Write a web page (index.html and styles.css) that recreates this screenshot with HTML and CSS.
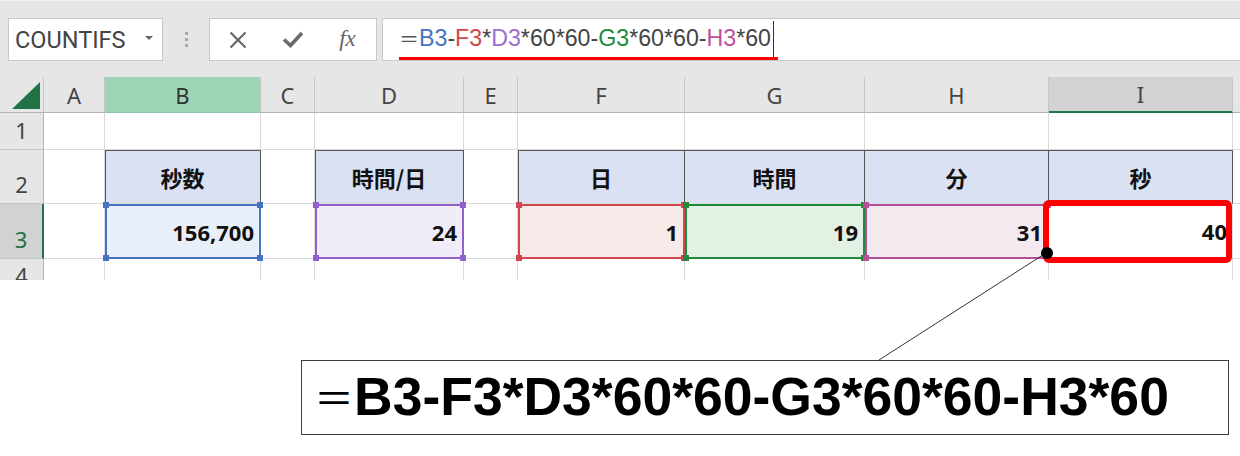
FILE: index.html
```html
<!doctype html>
<html>
<head>
<meta charset="utf-8">
<title>秒数から日・時間・分・秒</title>
<link rel="stylesheet" href="styles.css">
</head>
<body>

<div class="toolbar">
	<div class="namebox"><span class="name">COUNTIFS</span><span class="caret"></span></div>
	<div class="grip"><i></i><i></i><i></i></div>
	<div class="btns">
		<span class="btn"><svg width="18" height="16" viewBox="0 0 18 16"><path d="M1.5 0.5 L16.5 15.5 M16.5 0.5 L1.5 15.5" stroke="#6a6a6a" stroke-width="2.2" fill="none"/></svg></span>
		<span class="btn"><svg width="22" height="17" viewBox="0 0 22 17"><path d="M2 8.5 L8.5 14.5 L20 2" stroke="#6a6a6a" stroke-width="3.6" fill="none"/></svg></span>
		<span class="btn fx">fx</span>
	</div>
	<div class="formula">
		<span class="ftext"><span class="eq">＝</span><span class="r-b">B3</span>-<span class="r-f">F3</span>*<span class="r-d">D3</span>*60*60-<span class="r-g">G3</span>*60*60-<span class="r-h">H3</span>*60<span class="cursor"></span></span>
	</div>
</div>

<div class="sheet">
	<!-- 列見出し -->
	<div class="corner"><svg width="44" height="36" viewBox="0 0 44 36"><polygon points="40,5 40,32 12,32" fill="#217346"/></svg></div>
	<div class="ch">A</div>
	<div class="ch ch-b">B</div>
	<div class="ch">C</div>
	<div class="ch">D</div>
	<div class="ch">E</div>
	<div class="ch">F</div>
	<div class="ch">G</div>
	<div class="ch">H</div>
	<div class="ch ch-i">I</div>
	<div class="ch last"></div>

	<!-- 1行目 -->
	<div class="rh">1</div>
	<div class="c"></div><div class="c"></div><div class="c"></div><div class="c"></div><div class="c"></div>
	<div class="c"></div><div class="c"></div><div class="c"></div><div class="c"></div><div class="c last"></div>

	<!-- 2行目 -->
	<div class="rh">2</div>
	<div class="c"></div>
	<div class="c hd">秒数</div>
	<div class="c"></div>
	<div class="c hd">時間/日</div>
	<div class="c"></div>
	<div class="c hd">日</div>
	<div class="c hd">時間</div>
	<div class="c hd">分</div>
	<div class="c hd">秒</div>
	<div class="c last"></div>

	<!-- 3行目 -->
	<div class="rh rh-sel">3</div>
	<div class="c"></div>
	<div class="c val v-b">156,700</div>
	<div class="c"></div>
	<div class="c val v-d">24</div>
	<div class="c"></div>
	<div class="c val v-f">1</div>
	<div class="c val v-g">19</div>
	<div class="c val v-h">31</div>
	<div class="c num">40</div>
	<div class="c last"></div>

	<!-- 4行目 -->
	<div class="rh">4</div>
	<div class="c"></div><div class="c"></div><div class="c"></div><div class="c"></div><div class="c"></div>
	<div class="c"></div><div class="c"></div><div class="c"></div><div class="c"></div><div class="c last"></div>
</div>

<div class="below">
	<div class="callout"><span class="eq">＝</span>B3-F3*D3*60*60-G3*60*60-H3*60</div>
</div>

<svg class="marks" width="1240" height="456" viewBox="0 0 1240 456">
	<line x1="1046" y1="253" x2="879" y2="360" stroke="#333" stroke-width="1"/>
	<rect x="1046" y="203" width="183" height="57" rx="3" fill="none" stroke="#ff0000" stroke-width="6"/>
	<circle cx="1047" cy="253" r="6" fill="#000"/>
</svg>

</body>
</html>
```

FILE: styles.css
```css
*{ margin:0; padding:0; box-sizing:border-box}
body{ width:1240px; height:456px; overflow:hidden; position:relative; background:#fff; font-family:"Noto Sans","Noto Sans CJK JP",sans-serif; color:#222}

/* 数式バー */
.toolbar{ height:77px; background:#e6e6e6; border-top:1px solid #f2f2f2; display:flex; align-items:flex-start; padding:17px 0 0 8px}
.namebox{ width:155px; height:43px; background:#fff; border:1px solid #c8c8c8; display:flex; align-items:center; padding-left:6px}
.namebox .name{ font-family:Roboto,sans-serif; font-size:23.5px; color:#444}
.caret{ margin-left:auto; margin-right:9px; margin-top:-4px; border-left:4px solid transparent; border-right:4px solid transparent; border-top:4px solid #666}
.grip{ width:46px; display:flex; flex-direction:column; align-items:center; gap:3px; padding-top:14px}
.grip i{ width:3px; height:3px; background:#a8a8a8}
.btns{ width:168px; height:43px; background:#fff; border:1px solid #c8c8c8; display:flex; align-items:center}
.btn{ width:55px; display:flex; justify-content:center; align-items:center}
.btn.fx{ font-family:"Liberation Serif",serif; font-style:italic; font-size:23px; color:#666; margin-top:-2px}
.formula{ flex:1; height:43px; margin-left:5px; background:#fff; border:1px solid #c8c8c8; border-right:none; padding-left:16px; display:flex}
.ftext{ display:flex; align-items:center; border-bottom:3px solid #ff0000; padding:0 4px 0 0; font-family:"Liberation Sans","Noto Sans CJK JP",sans-serif; font-size:23.2px; color:#444; white-space:pre}
.ftext .eq{ font-family:"Noto Sans CJK JP",sans-serif; font-size:20px; color:#555}
.r-b{ color:#4472c4}
.r-f{ color:#d04848}
.r-d{ color:#9b6ed0}
.r-g{ color:#1e8c3c}
.r-h{ color:#c0509b}
.cursor{ width:1px; height:36px; background:#333; margin-left:2px; align-self:flex-end}

/* シート */
.sheet{ display:grid; grid-template-columns:44px 61px 156px 54px 149px 54px 167px 180px 184px 184px 7px; grid-template-rows:36px 37px 54px 55px 36px; height:203px; overflow:hidden}
.corner{ background:#e6e6e6; border-right:1px solid #c6c6c6; border-bottom:1px solid #b4b4b4}
.corner svg{ display:block}
.ch{ background:#e6e6e6; border-right:1px solid #c6c6c6; border-bottom:1px solid #b4b4b4; display:flex; align-items:center; justify-content:center; font-size:22px; color:#444}
.ch-b{ background:#9fd5b7; border-bottom-color:#8cc4a4; color:#333}
.ch-i{ background:#d2d2d2; border-bottom:2px solid #217346}
.ch.last{ border-right:none}
.rh{ background:#e6e6e6; border-right:1px solid #b4b4b4; border-bottom:1px solid #c6c6c6; display:flex; justify-content:center; align-items:flex-end; padding-bottom:4px; font-size:22px; line-height:30px; color:#444}
.rh-sel{ background:#d2d2d2; color:#217346; border-right:2px solid #217346}
.c{ border-right:1px solid #dadada; border-bottom:1px solid #dadada}
.c.last{ border-right:none}

.hd{ background:#d9e1f2; border-right-color:#555; box-shadow:inset 1px 1px #555; display:flex; align-items:center; justify-content:center; font-family:"Noto Sans CJK JP",sans-serif; font-weight:700; font-size:22px; color:#111}
.hd + .hd{ box-shadow:inset 0 1px #555}

.val, .num{ display:flex; align-items:center; justify-content:flex-end; padding-right:5px; font-weight:700; font-size:22px; color:#111}
.val{ position:relative; border:2px solid var(--c); background:var(--bg)}
.val::before{ content:""; position:absolute; top:-4px; left:-4px; right:-4px; bottom:-4px;
	background:linear-gradient(var(--c),var(--c)) left top/6px 6px no-repeat,
		linear-gradient(var(--c),var(--c)) right top/6px 6px no-repeat,
		linear-gradient(var(--c),var(--c)) left bottom/6px 6px no-repeat,
		linear-gradient(var(--c),var(--c)) right bottom/6px 6px no-repeat}
.v-b{ --c:#4472c4; --bg:#e9eff9}
.v-d{ --c:#9060cc; --bg:#f1edf8}
.v-f{ --c:#d0474f; --bg:#f9eaea}
.v-g{ --c:#1f8a3b; --bg:#e3f1e5}
.v-h{ --c:#b4509a; --bg:#f5e9f0}

/* 吹き出し */
.below{ padding:80px 0 0 301px}
.callout{ width:928px; height:75px; border:1.5px solid #404040; display:flex; align-items:center; padding:0 0 3px 12px; font-family:"Liberation Sans",Arial,sans-serif; font-weight:700; font-size:53.5px; color:#000; white-space:pre}
.callout .eq{ font-family:"Noto Sans CJK JP",sans-serif; font-weight:400; font-size:40px}

.marks{ position:absolute; top:0; left:0; pointer-events:none}
```
